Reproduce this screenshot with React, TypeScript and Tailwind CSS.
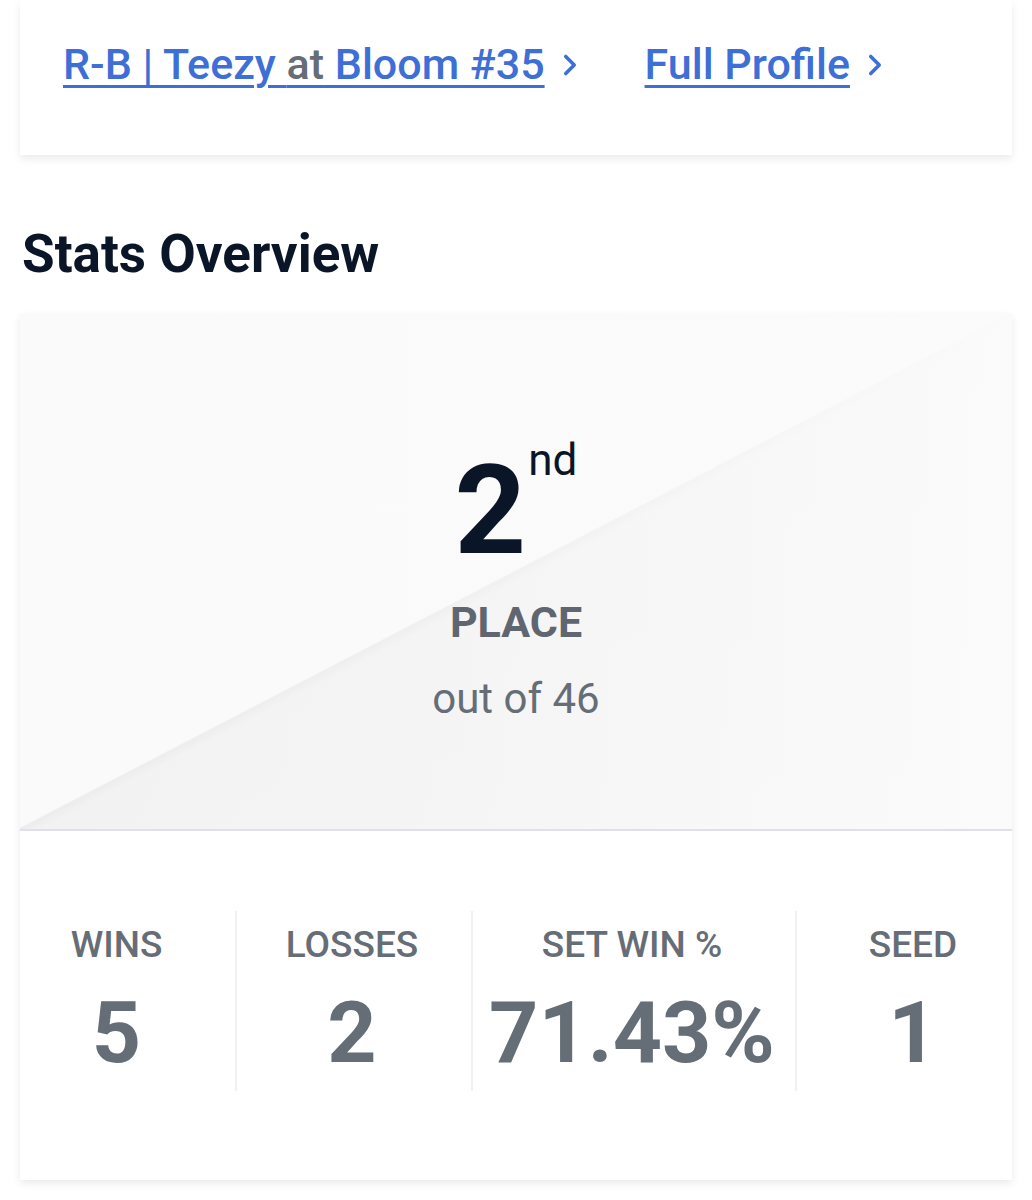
import { ChevronRight } from 'lucide-react';

const stats = [
  { label: 'WINS', value: '5', pad: 'pr-[22px]' },
  { label: 'LOSSES', value: '2', pad: 'pr-[4px]' },
  { label: 'SET WIN %', value: '71.43%', pad: 'pr-[4px]' },
  { label: 'SEED', value: '1', pad: 'pl-[18px]' },
];

export default function App() {
  return (
    <div className="min-h-[1200px] bg-white px-5 font-['Roboto',sans-serif]">
      {/* Event card */}
      <div className="flex h-[155px] items-center gap-[58px] bg-white pb-[26px] pl-[43px] shadow-[0_4px_8px_rgba(0,0,0,0.08)]">
        <a href="#" className="flex items-center gap-2 text-[43px] font-medium leading-none text-[#3d6fd6]">
          <span className="underline decoration-[3px] underline-offset-[6px]">
            R-B | Teezy <span className="text-[#656d77]">at</span> Bloom #35
          </span>
          <ChevronRight size={34} strokeWidth={2.5} />
        </a>
        <a href="#" className="flex items-center gap-2 text-[43px] font-medium leading-none text-[#3d6fd6]">
          <span className="underline decoration-[3px] underline-offset-[6px]">Full Profile</span>
          <ChevronRight size={34} strokeWidth={2.5} />
        </a>
      </div>

      <h2 className="mt-[73px] pl-[2px] text-[53px] font-bold leading-none text-[#0a1628]">Stats Overview</h2>

      {/* Stats card */}
      <div className="mt-[33px] bg-white shadow-[0_3px_8px_rgba(0,0,0,0.09)]">
        <div className="flex h-[517px] flex-col items-center border-b-2 border-[#dfe1e8] bg-[linear-gradient(to_right,rgba(251,251,251,0)_0%,rgba(251,251,251,0.2)_40%,rgba(251,251,251,0.95)_100%),linear-gradient(to_bottom_right,#fafafa_0%,#fafafa_49.8%,#ececed_50%,#f2f2f3_51%,#f4f4f5_100%)] pt-[134px]">
          <div className="flex items-start">
            <span className="text-[125px] font-bold leading-none text-[#0a1628]">2</span>
            <span className="-mt-[10px] ml-[2px] text-[44px] leading-none text-[#0a1628]">nd</span>
          </div>
          <div className="mt-[28px] text-[43px] font-bold leading-none text-[#5f6670]">PLACE</div>
          <div className="mt-[34px] text-[42px] leading-none text-[#656d77]">out of 46</div>
        </div>

        <div className="grid h-[349px] grid-cols-[217px_236px_324px_214px] items-center pb-[10px]">
          {stats.map((s, i) => (
            <div
              key={s.label}
              className={
                i < stats.length - 1
                  ? `flex h-[180px] flex-col items-center justify-center border-r-2 border-[#f1f1f3] ${s.pad}`
                  : `flex h-[180px] flex-col items-center justify-center ${s.pad}`
              }
            >
              <div className="text-[37px] font-medium leading-none text-[#656d77]">{s.label}</div>
              <div className="mt-[27px] text-[86px] font-bold leading-none text-[#656d77]">{s.value}</div>
            </div>
          ))}
        </div>
      </div>
    </div>
  );
}
